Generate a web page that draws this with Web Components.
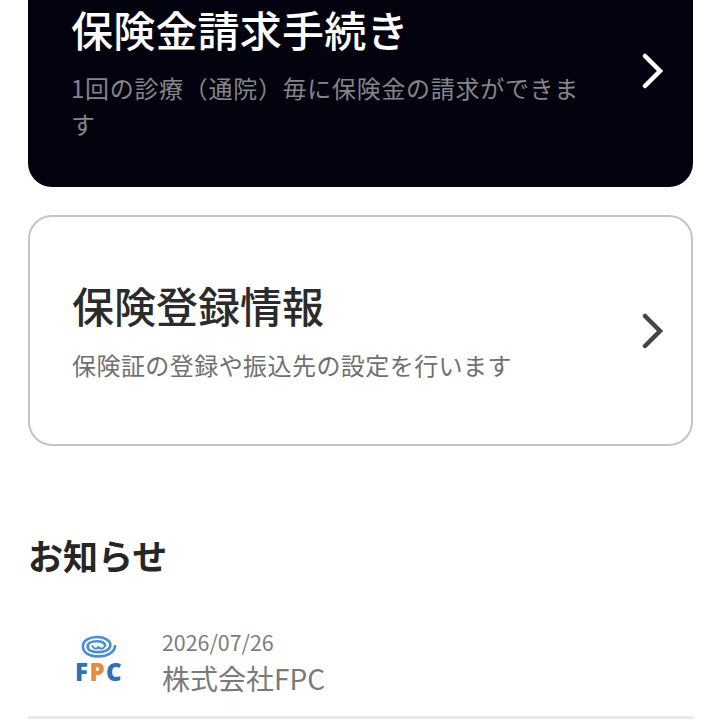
<!DOCTYPE html>
<html lang="ja">
<head>
<meta charset="utf-8">
<title>FPC</title>
<style>
  html, body { margin: 0; height: 720px; overflow: hidden; background: #fff; }
  body { font-family: "Noto Sans CJK JP", "Noto Sans", sans-serif; }
</style>
</head>
<body>
<home-page>
  <menu-card variant="dark" heading="保険金請求手続き" note="1回の診療（通院）毎に保険金の請求ができます"></menu-card>
  <menu-card heading="保険登録情報" note="保険証の登録や振込先の設定を行います"></menu-card>
  <section-title>お知らせ</section-title>
  <news-row date="2026/07/26" name="株式会社FPC"></news-row>
</home-page>

<script>
class HomePage extends HTMLElement {
    constructor() {
        super();
        this.attachShadow({ mode: 'open' });
        this.shadowRoot.innerHTML = `
            <style>
                :host {
                    display: flex;
                    flex-direction: column;
                    padding: 0 27px 0 28px;
                    margin-top: -40px;
                }
            </style>
            <slot></slot>
        `;
    }
}

class MenuCard extends HTMLElement {
    constructor() {
        super();
        this.attachShadow({ mode: 'open' });
    }

    connectedCallback() {
        const dark = this.getAttribute('variant') === 'dark';
        this.shadowRoot.innerHTML = `
            <style>
                :host {
                    display: block;
                    margin-bottom: 28px;
                }
                .card {
                    box-sizing: border-box;
                    display: flex;
                    align-items: center;
                    justify-content: space-between;
                    border-radius: 24px;
                    padding: ${dark ? '41px 28px 46px 43px' : '0 26px 0 42px'};
                    height: ${dark ? '227px' : '231px'};
                    background: ${dark ? '#03030f' : '#fff'};
                    border: ${dark ? '0' : '2px solid #c4c4c4'};
                }
                .text { width: 530px; padding-bottom: ${dark ? '0' : '4px'}; }
                h2 {
                    margin: 0;
                    font-size: 42px;
                    line-height: ${dark ? '55px' : '60px'};
                    font-weight: 500;
                    letter-spacing: ${dark ? '0.2px' : '0'};
                    color: ${dark ? '#fff' : '#2b2b2b'};
                }
                p {
                    margin: ${dark ? '14px' : '12px'} 0 0;
                    font-size: 24px;
                    line-height: 36px;
                    letter-spacing: ${dark ? '0.7px' : '0.44px'};
                    color: ${dark ? '#85858a' : '#6f6f6f'};
                }
                svg { flex: none; width: 24px; height: 36px; }
            </style>
            <div class="card">
                <div class="text">
                    <h2>${this.getAttribute('heading')}</h2>
                    <p>${this.getAttribute('note')}</p>
                </div>
                <svg viewBox="0 0 24 36" fill="none" stroke="${dark ? '#fff' : '#444'}" stroke-width="4.5" stroke-linecap="round" stroke-linejoin="miter">
                    <path d="M4 3 L19 18 L4 33"/>
                </svg>
            </div>
        `;
    }
}

class SectionTitle extends HTMLElement {
    constructor() {
        super();
        this.attachShadow({ mode: 'open' });
        this.shadowRoot.innerHTML = `
            <style>
                :host {
                    display: block;
                    margin-top: 56px;
                    font-size: 35px;
                    line-height: 50px;
                    font-weight: 700;
                    color: #262626;
                }
            </style>
            <slot></slot>
        `;
    }
}

class NewsRow extends HTMLElement {
    constructor() {
        super();
        this.attachShadow({ mode: 'open' });
    }

    connectedCallback() {
        this.shadowRoot.innerHTML = `
            <style>
                :host {
                    display: flex;
                    align-items: flex-start;
                    gap: 39px;
                    margin-top: 47px;
                    padding: 0 0 17px 47px;
                    border-bottom: 3px solid #e9e9e9;
                }
                .logo {
                    flex: none;
                    width: 48px;
                    height: 44px;
                    display: flex;
                    flex-direction: column;
                    align-items: center;
                    margin-top: 8px;
                }
                .logo svg { flex: none; width: 36px; height: 23px; margin-bottom: 2px; }
                .fpc {
                    font-family: "Open Sans", "Liberation Sans", sans-serif;
                    font-size: 24px;
                    line-height: 23px;
                    font-weight: 800;
                    color: #2f6fb5;
                    letter-spacing: 1.4px;
                    white-space: nowrap;
                }
                .fpc b { color: #e88b3c; font-weight: 800; }
                .date {
                    font-size: 21.4px;
                    line-height: 30px;
                    color: #7d7d7d;
                }
                .name {
                    font-size: 28px;
                    line-height: 42px;
                    color: #7a7a7a;
                }
            </style>
            <div class="logo">
                <svg viewBox="0 0 38 23" fill="none" stroke="#4a8fd0" stroke-width="2.8" stroke-linecap="round">
                    <path d="M36 11 C35 18 28 22 19 22 C9 22 2 18 2 11.5 C2 5 9 1.5 17 1.5 C25 1.5 31 5 31 10 C31 15 25 17.5 18 17.5 C11 17.5 7 15 7 11.5 C7 8 11 6 17 6 C22 6 25.5 8 25.5 10.5"/>
                    <path d="M12 11 C14 14.5 16 14.5 18.5 12 C21 14.5 23 14.5 25 11.5" stroke-width="2"/>
                </svg>
                <div class="fpc">F<b>P</b>C</div>
            </div>
            <div class="text">
                <div class="date">${this.getAttribute('date')}</div>
                <div class="name">${this.getAttribute('name')}</div>
            </div>
        `;
    }
}

customElements.define('home-page', HomePage);
customElements.define('menu-card', MenuCard);
customElements.define('section-title', SectionTitle);
customElements.define('news-row', NewsRow);
</script>
</body>
</html>
